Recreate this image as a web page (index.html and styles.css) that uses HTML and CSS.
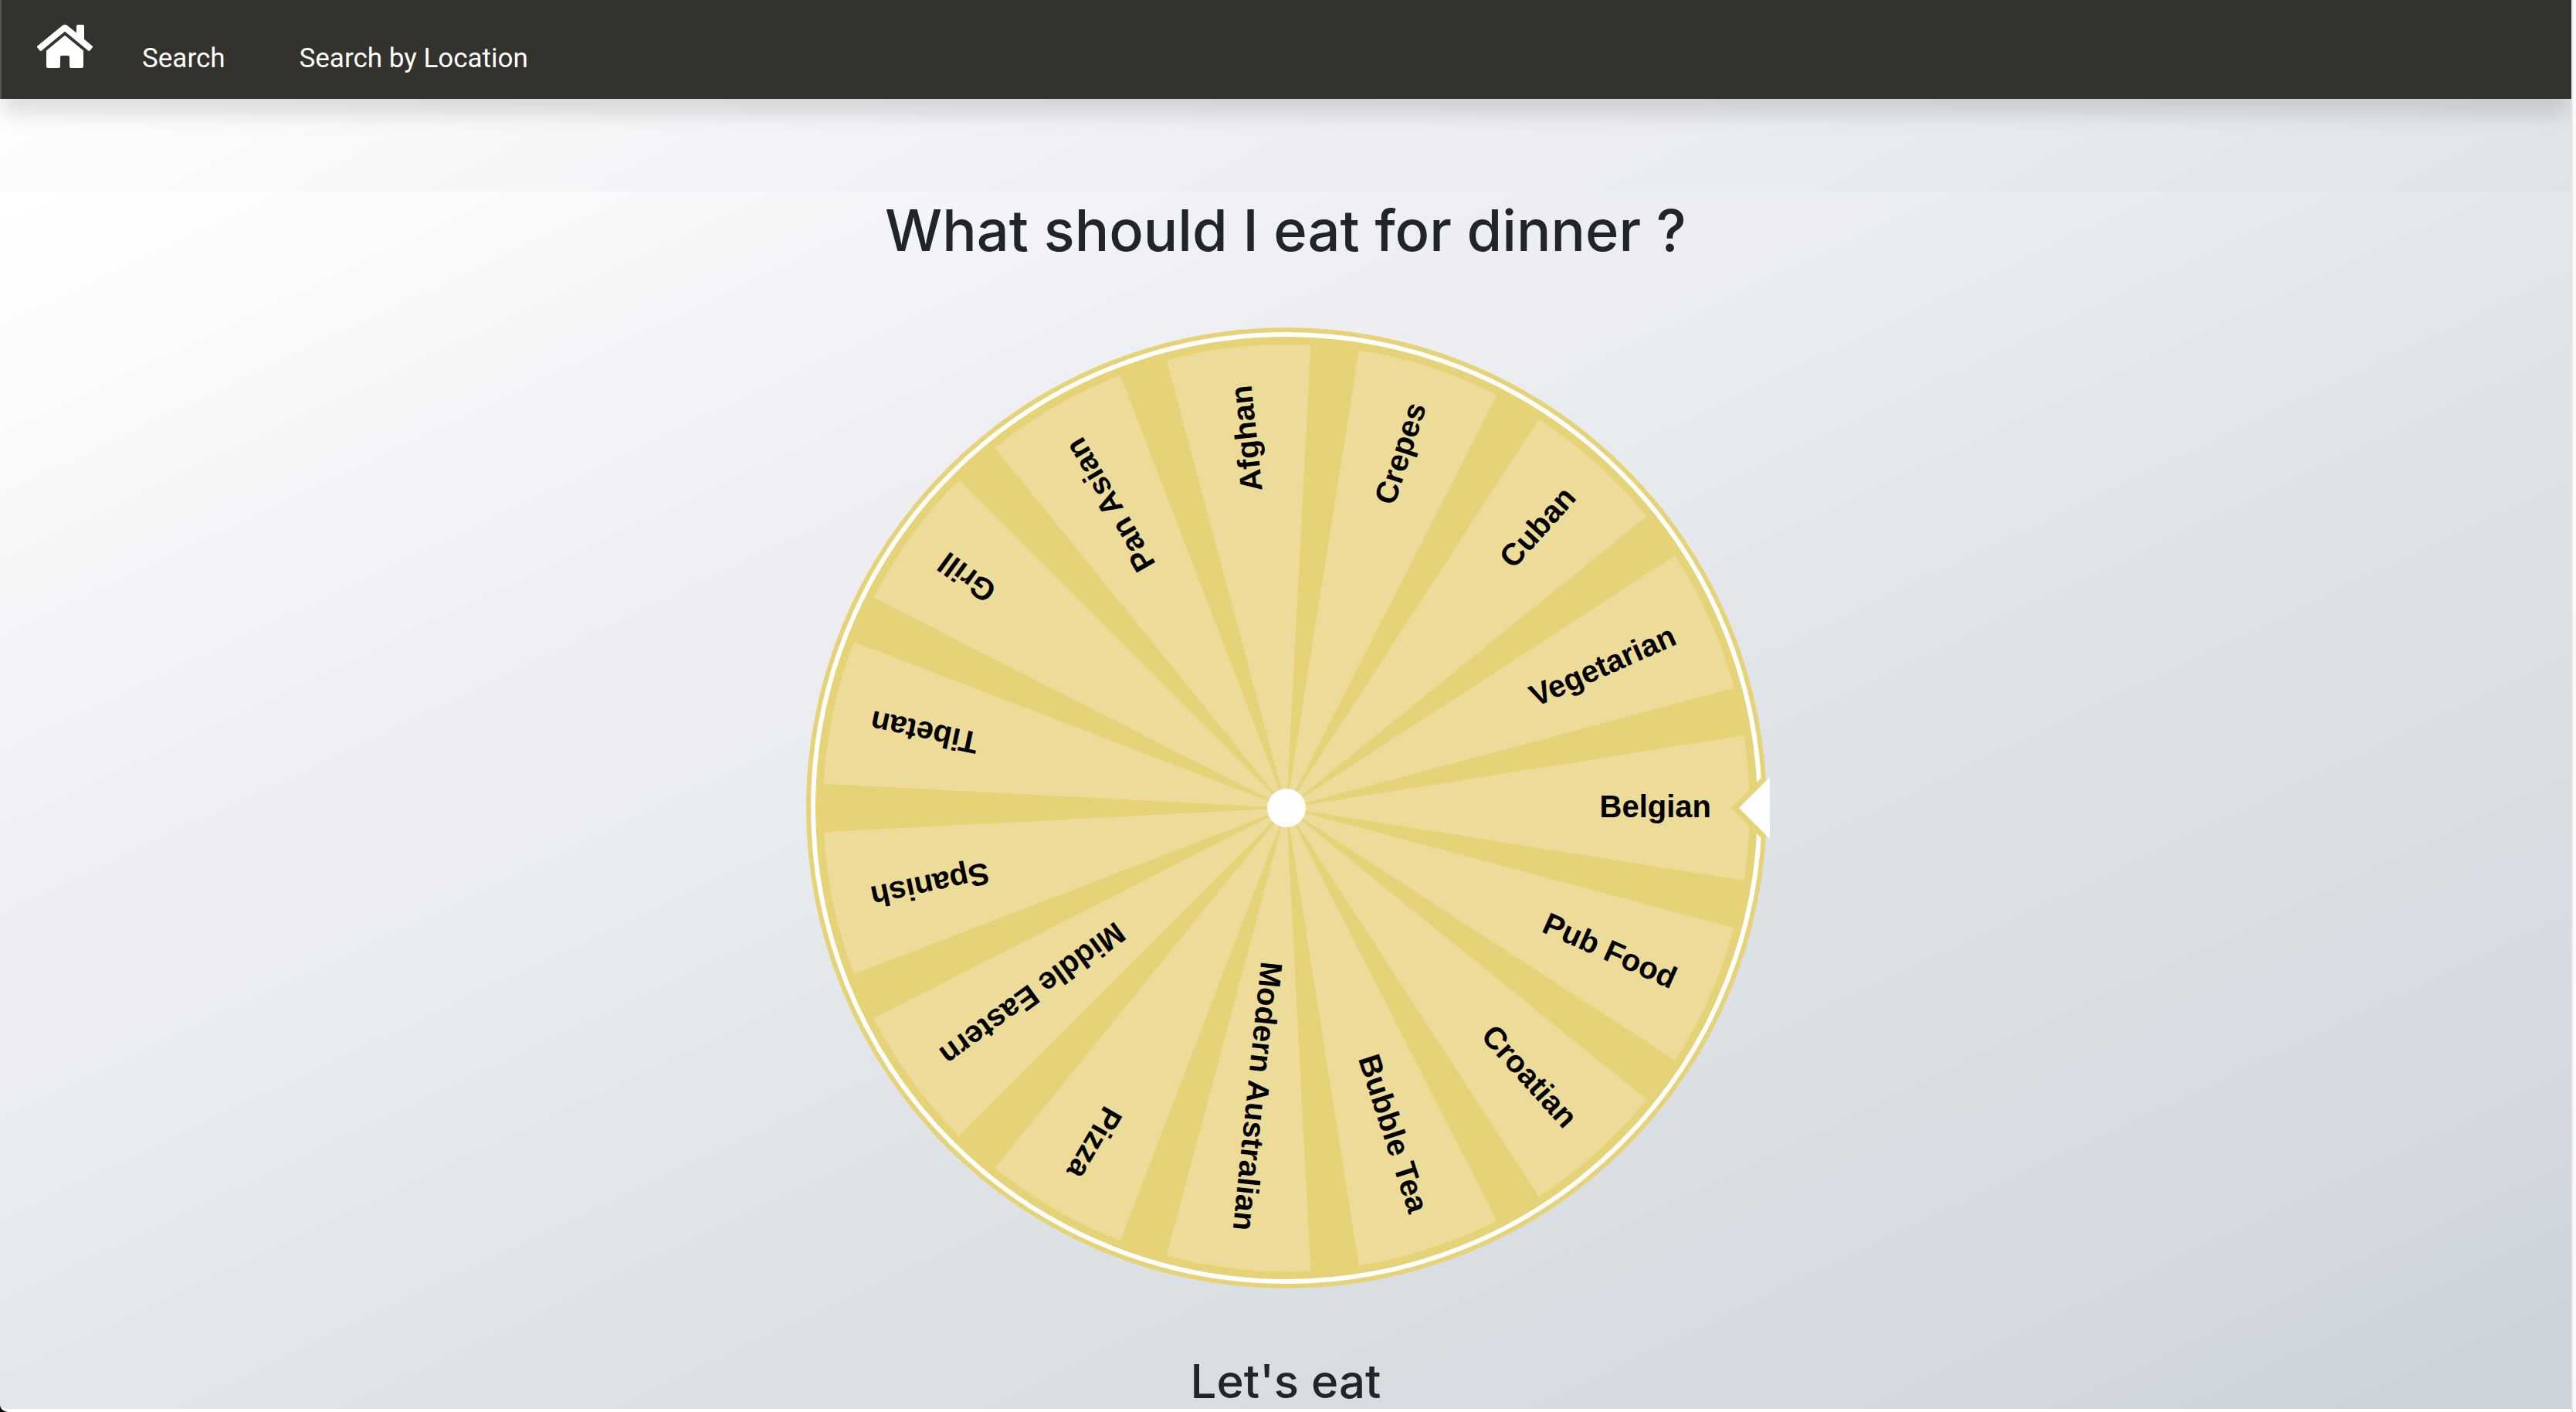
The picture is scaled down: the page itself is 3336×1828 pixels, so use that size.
FILE: index.html
```html
<!DOCTYPE html>
<html lang="en">
<head>
<meta charset="utf-8">
<title>What should I eat for dinner ?</title>
<link rel="stylesheet" href="styles.css">
</head>
<body>
<div class="page">
  <header class="header">
    <nav class="nav">
      <a class="nav-home" href="#" aria-label="Home">
        <svg class="nav-icon" viewBox="0 0 576 512" aria-hidden="true"><path d="M280.37 148.26L96 300.11V464a16 16 0 0 0 16 16l112.06-.29a16 16 0 0 0 15.92-16V368a16 16 0 0 1 16-16h64a16 16 0 0 1 16 16v95.64a16 16 0 0 0 16 16.05L464 480a16 16 0 0 0 16-16V300L295.67 148.26a12.19 12.19 0 0 0-15.3 0zM571.6 251.47L488 182.56V44.05a12 12 0 0 0-12-12h-56a12 12 0 0 0-12 12v72.61L318.47 43a48 48 0 0 0-61 0L4.34 251.47a12 12 0 0 0-1.6 16.9l25.5 31A12 12 0 0 0 45.15 301l235.22-193.74a12.19 12.19 0 0 1 15.3 0L530.9 301a12 12 0 0 0 16.9-1.6l25.5-31a12 12 0 0 0-1.7-16.93z"/></svg>
      </a>
      <a class="nav-link" href="#">Search</a>
      <a class="nav-link" href="#">Search by Location</a>
    </nav>
  </header>
  <main class="main">
    <h1 class="title">What should I eat for dinner ?</h1>
    <svg class="wheel" viewBox="-628 -622 1254 1244" role="img" aria-label="Wheel of cuisines">
      <defs>
        <path id="slice" d="M0 0L592.6 -93.9A600 600 0 0 1 592.6 93.9Z"/>
      </defs>
      <circle class="wheel-base" r="622"/>
      <circle class="wheel-ring" r="613"/>
      <g class="wheel-slices">
        <use href="#slice"/>
        <use href="#slice" transform="rotate(24)"/>
        <use href="#slice" transform="rotate(48)"/>
        <use href="#slice" transform="rotate(72)"/>
        <use href="#slice" transform="rotate(96)"/>
        <use href="#slice" transform="rotate(120)"/>
        <use href="#slice" transform="rotate(144)"/>
        <use href="#slice" transform="rotate(168)"/>
        <use href="#slice" transform="rotate(192)"/>
        <use href="#slice" transform="rotate(216)"/>
        <use href="#slice" transform="rotate(240)"/>
        <use href="#slice" transform="rotate(264)"/>
        <use href="#slice" transform="rotate(288)"/>
        <use href="#slice" transform="rotate(312)"/>
        <use href="#slice" transform="rotate(336)"/>
      </g>
      <g class="wheel-labels">
        <text x="550" y="12">Belgian</text>
        <text x="550" y="12" transform="rotate(24)">Pub Food</text>
        <text x="550" y="12" transform="rotate(48)">Croatian</text>
        <text x="550" y="12" transform="rotate(72)">Bubble Tea</text>
        <text x="550" y="12" transform="rotate(96)">Modern Australian</text>
        <text x="550" y="12" transform="rotate(120)">Pizza</text>
        <text x="550" y="12" transform="rotate(144)">Middle Eastern</text>
        <text x="550" y="12" transform="rotate(168)">Spanish</text>
        <text x="550" y="12" transform="rotate(192)">Tibetan</text>
        <text x="550" y="12" transform="rotate(216)">Grill</text>
        <text x="550" y="12" transform="rotate(240)">Pan Asian</text>
        <text x="550" y="12" transform="rotate(264)">Afghan</text>
        <text x="550" y="12" transform="rotate(288)">Crepes</text>
        <text x="550" y="12" transform="rotate(312)">Cuban</text>
        <text x="550" y="12" transform="rotate(336)">Vegetarian</text>
      </g>
      <circle class="wheel-hub" r="25"/>
      <path class="wheel-base" d="M576 0L620 -44V44Z"/>
      <path class="wheel-hub" d="M586 0L626 -40V40Z"/>
    </svg>
    <h2 class="subtitle">Let's eat</h2>
  </main>
</div>
</body>
</html>
```
FILE: styles.css
```css
* {
  box-sizing: border-box;
}

:root {
  --fade: linear-gradient(to right bottom, #ffffff, #fbfcfb, #f6f7f9, #f2f3f6, #eeeff3, #ebedf1, #e7ebee, #e3e7eb, #dfe3e8, #dce1e5, #d9dee2, #d7dce2, #d4d9e2, #cfd5dd, #c9d1d9);
  --gold: #e6d277;
}

html {
  background: #000000;
}

body {
  margin: 0;
  border-right: 4px solid #fafafa;
  color: #212529;
  font-family: Inter, "Liberation Sans", sans-serif;
}

.page {
  display: flex;
  flex-direction: column;
  height: 100vh;
  border-right: 2px solid #e8e8e8;
  border-bottom: 4px solid #ffffff;
  border-bottom-left-radius: 10px;
  background: var(--fade);
  overflow: hidden;
}

.header {
  flex: none;
  padding-bottom: 120px;
}

.nav {
  display: flex;
  align-items: flex-start;
  height: 128px;
  padding: 28px 48px 28px 46px;
  border-left: 2px solid #555450;
  background: #33322c;
  box-shadow: 0 24px 24px -4px rgba(0, 0, 0, 0.12);
}

.nav-home {
  margin-right: 64px;
}

.nav-icon {
  display: block;
  width: 72px;
  height: 64px;
  fill: #ffffff;
}

.nav-link {
  margin-right: 96px;
  padding-top: 24px;
  color: #ffffff;
  font-family: Roboto, "Liberation Sans", sans-serif;
  font-size: 35px;
  line-height: 48px;
  text-decoration: none;
}

.main {
  flex: 1;
  display: flex;
  flex-direction: column;
  align-items: center;
  background: var(--fade);
}

.title {
  margin: 2px 0 78px;
  font-size: 74px;
  font-weight: 500;
  line-height: 96px;
}

.wheel {
  flex: none;
  width: 1254px;
  height: 1244px;
}

.wheel-base {
  fill: var(--gold);
}

.wheel-ring {
  fill: none;
  stroke: #ffffff;
  stroke-width: 6;
}

.wheel-slices {
  fill: #ecdb99;
}

.wheel-labels {
  fill: #000000;
  font-family: "Liberation Sans", Arial, sans-serif;
  font-size: 40px;
  font-weight: 700;
  text-anchor: end;
}

.wheel-hub {
  fill: #ffffff;
}

.subtitle {
  margin: 80px 0 0;
  font-size: 60px;
  font-weight: 500;
  line-height: 80px;
}
```
